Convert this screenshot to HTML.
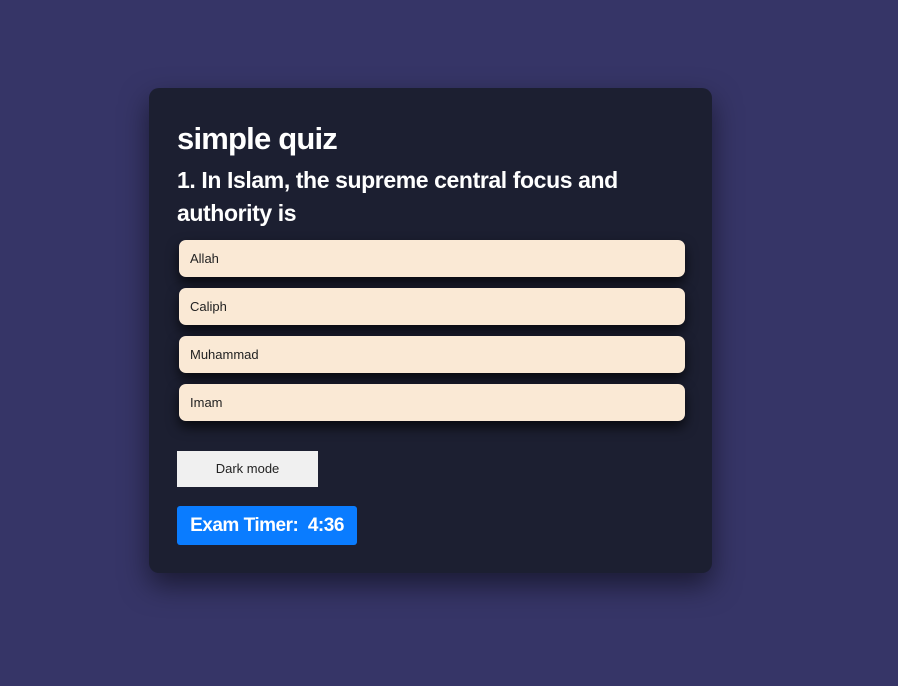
<!DOCTYPE html>
<html><head><style>
body{margin:0;width:898px;height:686px;background:#363567;font-family:"Liberation Sans",sans-serif;overflow:hidden;position:relative}
.card{position:absolute;left:149px;top:88px;width:563px;height:485px;background:#1c1f31;border-radius:10px;box-shadow:0 12px 28px rgba(0,0,0,.5)}
h1{position:absolute;left:28px;top:33px;margin:0;color:#fff;font-size:31px;font-weight:bold;letter-spacing:-0.8px}
h2{position:absolute;left:28px;top:76px;margin:0;width:500px;color:#fff;font-size:23px;line-height:33px;font-weight:bold;letter-spacing:-0.4px}
.opt{position:absolute;left:30px;width:506px;height:37px;background:#fae9d5;border-radius:7px;box-shadow:0 6px 12px rgba(0,0,0,.7);font-size:13px;color:#222;line-height:37px;text-indent:11px}
.dm{position:absolute;left:28px;top:363px;width:141px;height:36px;background:#f0f0f0;font-size:13px;color:#222;text-align:center;line-height:36px}
.tm{position:absolute;left:28px;top:418px;width:180px;height:39px;background:#0a7cff;border-radius:3px;color:#fff;font-weight:bold;font-size:19px;line-height:39px;text-align:center;letter-spacing:-0.5px}
</style></head><body>
<div class="card">
<h1>simple quiz</h1>
<h2>1. In Islam, the supreme central focus and authority is</h2>
<div class="opt" style="top:152px">Allah</div>
<div class="opt" style="top:200px">Caliph</div>
<div class="opt" style="top:248px">Muhammad</div>
<div class="opt" style="top:296px">Imam</div>
<div class="dm">Dark mode</div>
<div class="tm">Exam Timer:&nbsp; 4:36</div>
</div>
</body></html>
